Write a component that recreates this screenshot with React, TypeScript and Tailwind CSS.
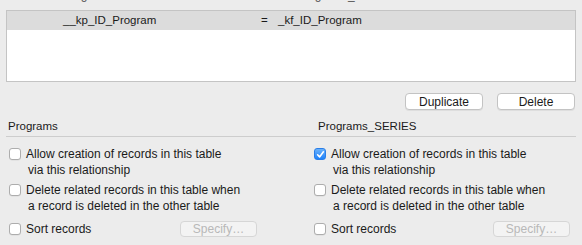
import React from "react";

const font = { fontFamily: '"Liberation Sans", Arial, sans-serif' };

function Checkbox({ checked }: { checked?: boolean }) {
  if (checked) {
    return (
      <div className="w-[12px] h-[12px] rounded-[3px] bg-gradient-to-b from-[#69b1fa] to-[#1a82fb] border border-[#2a7ee8] flex items-center justify-center shrink-0">
        <svg width="9" height="9" viewBox="0 0 9 9">
          <path d="M1.6 4.8 L3.6 6.9 L7.4 1.8" fill="none" stroke="white" strokeWidth="1.6" strokeLinecap="round" strokeLinejoin="round" />
        </svg>
      </div>
    );
  }
  return <div className="w-[12px] h-[12px] rounded-[3px] bg-white border border-[#adadad] shadow-[0_0.5px_0.5px_rgba(0,0,0,0.08)] shrink-0" />;
}

function TwoLine({ checked, l1, l2 }: { checked?: boolean; l1: string; l2: string }) {
  return (
    <div className="flex items-start">
      <div className="h-[16px] flex items-center">
        <Checkbox checked={checked} />
      </div>
      <div className="ml-[5px] text-[12px] leading-[16px] text-[#1a1a1a]">
        <div>{l1}</div>
        <div className="pl-[2px]">{l2}</div>
      </div>
    </div>
  );
}

function Section({ checked, sortLabelClass }: { checked?: boolean; sortLabelClass: string }) {
  return (
    <div className="flex flex-col">
      <TwoLine checked={checked} l1="Allow creation of records in this table" l2="via this relationship" />
      <div className="mt-[4px]">
        <TwoLine l1="Delete related records in this table when" l2="a record is deleted in the other table" />
      </div>
      <div className="mt-[6px] flex items-center h-[17px]">
        <Checkbox />
        <span className={`ml-[5px] text-[12px] leading-[16px] text-[#1a1a1a] ${sortLabelClass}`}>Sort records</span>
        <div className="w-[77px] h-[16px] rounded-[4px] border border-[#d6d6d6] bg-[#f3f3f3] flex items-center justify-center text-[12px] leading-[14px] text-[#b8b8b8]">
          Specify…
        </div>
      </div>
    </div>
  );
}

export default function App() {
  return (
    <div style={font} className="w-[582px] h-[245px] bg-[#ececec] overflow-hidden flex flex-col">
      <div className="h-[10px] overflow-hidden relative">
        <div className="flex mt-[-12px] text-[12px] leading-[14px] text-[#555]">
          <span className="ml-[62px] w-[234px]">Programs</span>
          <span>Programs_SERIES</span>
        </div>
      </div>
      <div className="mx-[6px] h-[72px] border border-[#c4c4c4] bg-white flex flex-col">
        <div className="h-[19px] bg-[#dcdcdc] flex items-center text-[11.5px] text-[#1a1a1a]">
          <span className="ml-[56px] w-[198px]">__kp_ID_Program</span>
          <span className="w-[17px]">=</span>
          <span>_kf_ID_Program</span>
        </div>
      </div>
      <div className="mt-[11px] flex justify-end pr-[7px] gap-[14px]">
        <div className="w-[78px] h-[17px] rounded-[4px] bg-white border border-[#c3c3c3] shadow-[0_1px_0_rgba(0,0,0,0.06)] flex items-center justify-center text-[12px] leading-[14px] text-[#1a1a1a]">
          Duplicate
        </div>
        <div className="w-[78px] h-[17px] rounded-[4px] bg-white border border-[#c3c3c3] shadow-[0_1px_0_rgba(0,0,0,0.06)] flex items-center justify-center text-[12px] leading-[14px] text-[#1a1a1a]">
          Delete
        </div>
      </div>
      <div className="mt-[9px] flex">
        <div className="w-[310px] pl-[8px] h-[14px] text-[11.5px] leading-[14px] text-[#1a1a1a]">Programs</div>
        <div className="pl-[8px] h-[14px] text-[11.5px] leading-[14px] text-[#1a1a1a]">Programs_SERIES</div>
      </div>
      <div className="mt-[3px] mx-[6px] h-px bg-[#cdcdcd]" />
      <div className="mt-[9px] flex">
        <div className="w-[305px] pl-[9px]">
          <Section sortLabelClass="w-[154px]" />
        </div>
        <div className="pl-[9px]">
          <Section checked sortLabelClass="w-[162px]" />
        </div>
      </div>
    </div>
  );
}
